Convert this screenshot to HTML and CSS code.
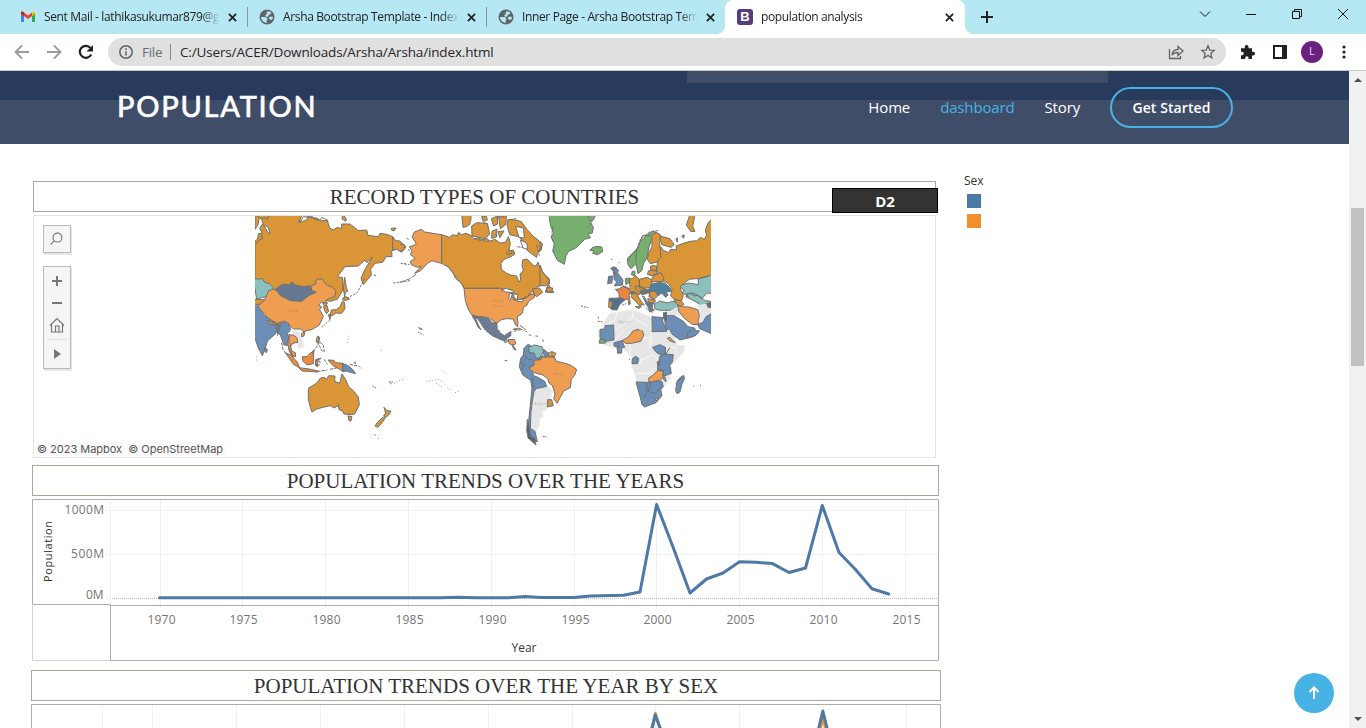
FILE: index.html
```html
<!DOCTYPE html>
<html lang="en">
<head>
<meta charset="utf-8">
<title>population analysis</title>
<link rel="stylesheet" href="styles.css">
</head>
<body>
<div class="window">
  <div class="tabstrip">
    <div class="tab">
      <svg class="fav" viewBox="0 0 16 16"><path fill="#4285f4" d="M1 4v9h3V7z"/><path fill="#34a853" d="M15 4v9h-3V7z"/><path fill="#fbbc04" d="M12 4l1.300-1.200c1-.5 1.700.2 1.700 1.200v1L12 7z"/><path fill="#ea4335" d="M1 5V4c0-1.200 1-1.800 2-1.200l5 3.700 4-3V7L8 10 4 7z"/><path fill="#c5221f" d="M1 5V4c0-1.200 1-1.800 2-1.200L4 3.500V7z"/></svg>
      <span class="tab-text">Sent Mail - lathikasukumar879@g</span>
      <svg class="x" viewBox="0 0 10 10"><path d="M1 1l8 8M9 1l-8 8"/></svg>
    </div>
    <div class="tab">
      <svg class="fav" viewBox="0 0 16 16"><circle cx="8" cy="8" r="7.500" fill="#5f6368"/><path fill="#b5e8f2" d="M8 2.500h3l1.500 2-2.500 1.200-1 2H7L6 6.500l1.500-1zM2 8h4.500l2.300 1.800-1 1.200v2.800C4.500 13.700 2.300 11.500 2 8zM9.500 9l2-1.500 2.500.5-.5 2.200-2 .8z"/></svg>
      <span class="tab-text">Arsha Bootstrap Template - Index</span>
      <svg class="x" viewBox="0 0 10 10"><path d="M1 1l8 8M9 1l-8 8"/></svg>
    </div>
    <div class="tab last">
      <svg class="fav" viewBox="0 0 16 16"><circle cx="8" cy="8" r="7.500" fill="#5f6368"/><path fill="#b5e8f2" d="M8 2.500h3l1.500 2-2.500 1.200-1 2H7L6 6.500l1.500-1zM2 8h4.500l2.300 1.800-1 1.200v2.800C4.500 13.700 2.300 11.500 2 8zM9.500 9l2-1.500 2.500.5-.5 2.200-2 .8z"/></svg>
      <span class="tab-text">Inner Page - Arsha Bootstrap Tem</span>
      <svg class="x" viewBox="0 0 10 10"><path d="M1 1l8 8M9 1l-8 8"/></svg>
    </div>
    <div class="tab active">
      <span class="bs">B</span>
      <span class="tab-text">population analysis</span>
      <svg class="x" viewBox="0 0 10 10"><path d="M1 1l8 8M9 1l-8 8"/></svg>
    </div>
    <svg class="plus" viewBox="0 0 12 12"><path d="M6 0v12M0 6h12"/></svg>
    <div class="controls">
      <svg viewBox="0 0 12 12"><path d="M1 3.500l5 5 5-5"/></svg>
      <svg viewBox="0 0 12 12"><path d="M1 6.500h10"/></svg>
      <svg viewBox="0 0 12 12"><path d="M1.500 3.500h7v7h-7zM3.500 3.500v-2h7v7h-2"/></svg>
      <svg viewBox="0 0 12 12"><path d="M1 1l10 10M11 1L1 11"/></svg>
    </div>
  </div>
  <div class="toolbar">
    <div class="navbtns">
      <svg viewBox="0 0 16 16"><path d="M15 8H2M8 1.500L1.500 8 8 14.500" stroke="#9b9b9b"/></svg>
      <svg viewBox="0 0 16 16"><path d="M1 8h13M8 1.500L14.500 8 8 14.500" stroke="#9b9b9b"/></svg>
      <svg viewBox="0 0 16 16"><path d="M13.200 10.500A6 6 0 1 1 12.500 4" stroke="#202124" stroke-width="2.200"/><path d="M15 1v6.500H8.500z" fill="#202124"/></svg>
    </div>
    <div class="omnibox">
      <svg class="info" viewBox="0 0 14 14"><circle cx="7" cy="7" r="6.200"/><path d="M7 6.200v4.300M7 3.300v1.700"/></svg>
      <span class="scheme">File</span><i class="bar"></i>
      <span class="url">C:/Users/ACER/Downloads/Arsha/Arsha/index.html</span>
      <svg class="share" viewBox="0 0 16 16"><path d="M1.500 5v9.500h11V12M4 11c.5-3.500 2.500-5.500 6-5.500V2.500l5 4.500-5 4.500v-3C7.500 8.500 5.500 9 4 11z"/></svg>
      <svg class="star" viewBox="0 0 16 16"><path d="M8 1.800l1.700 4.300 4.600.3-3.500 3 1.100 4.500L8 11.500l-3.900 2.400 1.100-4.500-3.500-3 4.600-.3z"/></svg>
    </div>
    <div class="actions">
      <svg viewBox="0 0 16 16"><path fill="#202124" d="M1 4.200h3.700V3a1.900 1.900 0 0 1 3.800 0v1.200H12v3.500h1.200a1.900 1.900 0 0 1 0 3.800H12V15H8.600v-1.100a1.700 1.700 0 0 0-3.400 0V15H1v-3.800h1.100a1.700 1.700 0 0 0 0-3.400H1z"/></svg>
      <svg viewBox="0 0 16 16"><path d="M2 2h12v12H2z" fill="none" stroke="#202124" stroke-width="2"/><path fill="#202124" d="M10 2h4v12h-4z"/></svg>
      <span class="avatar">L</span>
      <svg viewBox="0 0 16 16" fill="#202124"><circle cx="8" cy="3" r="1.600"/><circle cx="8" cy="8" r="1.600"/><circle cx="8" cy="13" r="1.600"/></svg>
    </div>
  </div>
  <div class="viewport">
    <div class="page">
      <header class="header">
        <span class="logo">POPULATION</span>
        <nav class="menu"><a>Home</a><a class="on">dashboard</a><a>Story</a><a class="cta">Get Started</a></nav>
      </header>
      <main class="content">
        <div class="dash">
          <h2 class="title t1">RECORD TYPES OF COUNTRIES<span class="d2">D2</span></h2>
          <section class="map">
            <div class="tools">
              <div class="tool"><svg viewBox="0 0 28 28"><circle cx="14.500" cy="12.500" r="4.800"/><path d="M11 16l-4 4"/></svg></div>
              <div class="tool tall"><svg viewBox="0 0 26 101"><path stroke-width="2" d="M8 14h10M13 9v10M8 36h10"/><path d="M6 58.500l7-7 7 7M7.500 57v8h11v-8M11.500 65v-6H15v6"/><path stroke="#e0e0e0" d="M3 72.500h20"/><path fill="#777" stroke="none" d="M10 82l7 5-7 5z"/></svg></div>
            </div>
            <svg class="world" viewBox="255 216 456 232">
              <defs>
                <clipPath id="north"><path d="M-20-20h700v380H-20z"/></clipPath>
                <clipPath id="south"><path d="M-20 30h800v400H-20z"/></clipPath>
              </defs>
              <g transform="translate(250 210) scale(.33333)" class="land">
                <path fill="#d99536" d="M15 10H160L145 38 165 22 200 24 212 32 232 32 240 55 250 60 262 52 275 56V42L300 42 325 62 350 60 354 76 385 80 390 70 410 73 428 80 437 92 450 93 468 110 455 127 440 118 425 122 426 140 408 140 398 157 375 160 362 178 364 195 340 224 333 205 345 178 367 142 350 158 345 150 325 168 285 170 262 200 278 203 279 240 262 268 240 274 150 250 15 232z"/>
                <path fill="#fff" d="M13 95l10-8 2-16 12-2-8-14 8-12 8 8 9 18 6 3-5-20-15-8-5-16-8-6-2 20-12 20zM150 38l10-18 16 2-10 9z"/>
                <path d="M428 80v42M170 20h18l6 8 16 2 5-8 20 10M20 18l15 9 9-5 7 7 6-11M19 101l10-12 8-2-3-18"/>
                <path fill="#d99536" d="M424 55l14-1-6 9-8-3zM278 10l12 20-4 4-10-8zM284 202l5 30 4 12-7 3-2 15-4-28z"/>
                <path fill="#8cc0bd" d="M10 205h5l14 3 7-3 9 13 12 2 14 14-14 12-4 15-15 1-18 6z"/>
                <path fill="#d99536" d="M10 268l37 1-14 13-23 3z"/>
                <path fill="#ef9e51" d="M24 288l20-18 12-28 15-5 24 18 22 15 27 2 20-18 22-10-7-14 18-8 1-12 8-3 12 1 7 12 8 6 14 6 11 10-3 18-14 4-14 8 3 8-16-4-8 10 9 4-6 9 11 20-12 26-20 13-18 4-9 4-9-9-22 0-12-12-20-5-19 3-25-14-10-18-16-12z"/>
                <path fill="#657a92" d="M78 236l23-14 17 3 6-9 13 9 28 6 10-4 9 5 1 9 14 6-22 9-22 18-31-2-33-15z"/>
                <path fill="#d99536" d="M244 300l15-1 12-10 5-14 7 1 2 20-10 14-17-1-8 6-10 2zM279 264l10-4 10 7-13 5-8-2zM236 313l7 2-3 12zM221 289l9-5 6 20-7 7-6-12z"/>
                <path fill="#ef9e51" d="M218 280l15-2-8 11z"/>
                <path stroke-dasharray="7 4" d="M290 265l32-17 23-46M240 332l-4-16M452 160l26 4M430 219l50-7M372 195l10 4M470 85l10 5M475 117l5 7"/>
                <path fill="#6b8eb6" d="M10 290l13-3 20 30 45 28-10 25-25 22-10 30-6 15-13-25-14-42zM79 344l8-5 9 7 5-13 14 6 7 20-10 12 9 22 1 32-8-19-12-1-11-30-10-7z"/>
                <path fill="#d99536" d="M50 330l25 10 4 6-21-4zM82 340l13-5-4 10z"/>
                <path d="M79 344l12 5-9 28"/>
                <path class="na" d="M127 360l18 4 7 13 7 15 1 18-14 7-7-22-14-16z"/>
                <path fill="#ef9e51" d="M117 374l14 7 12 15-20 5-1 17 7 22-11-15-5-26zM155 370l9-4-2 12-7 2zM203 379l6 4-4 18-7-7z"/>
              </g>
              <g transform="translate(250 320) scale(.33333)" class="land">
                <path fill="#ef9e51" d="M117 44l14 2 10 7 2 14-14 2-6 8-6-12zM120 76l6 18 10 4 1 12-8-2-13-26M202 50l5 0-1 20-7-9z"/>
                <path fill="#e98b3d" d="M106 98l18 8 20 23 4 14-18-10zM146 143l31 4 28 6-1 3-48-3zM157 110l14 0 12-13 8 4-1 30-19 4-12-11zM234 120l18 1 4 7 23 2v24l-13-8-16-8z"/>
                <path fill="#e98b3d" d="M197 119l12-4-5 7-2 18-6-4zM185 96l8-4-3 10z"/>
                <path fill="#6b8eb6" d="M278 130l18 8 14 13 7 10-16-4-12-4-11 2zM45 83l7 5-2 10-6-4z"/>
                <path stroke-dasharray="10 3" d="M198 120l15-6-7 9 5 3-6 12-7-2zM187 95l13-14 8-14M210 65l10 12 3 18-8-3-7-16M212 68l6 6M95 68l4 20 8 12M202 154l30-4M222 118l10 15M300 133l20 5-6-12M240 148l20-4"/>
                <path fill="#d99536" d="M175 205l27-17 8-13 12-3 8 6 6-11 19 1-1 16 15 6 7-28 11 17 9 21 14 12 15 19 3 23-14 28-12 2-20-2-5-10-9-2-4-13-11 7-12-7-22 5-19 5-14 9-5-14-6-24zM294 288l12 2-3 13-6-1zM402 262l9 10 12 1-7 12-10 8-5-8 6-5zM400 291l5 4-12 17-10 10-8-4 9-13z"/>
                <path stroke-dasharray="5 3" d="M373 343l4 3M385 355h2M367 198l14 8M417 186l10-1-3 7zM310 130l8-6M325 137l8 8M290 285l8-6M265 252l3 15M504 36l16 9M215 22l22-20"/>
                <path stroke-dasharray="2 7" stroke="#aaa" stroke-width="2" d="M432 190l30-14M530 184l40-6 30 32M575 150l8 7M292 67l5-20M558 190l20 12M615 218l11-4M392 90l4 4M20 110v14"/>
              </g>
              <g transform="translate(400 210) scale(.33333)"><g class="land" clip-path="url(#north)">
                <path fill="#ef9e51" d="M64 58l10 8 25 4 26 4v86l-16-4-13-4-12 7-22 23-18 8 20-22-12 4-18-8-3-10 15-9-15-11 5-12-8-12 11-3 10-6-13-20 7-15z"/>
                <path d="M48 193l-20 14-28 10M12 160l6 3" stroke-dasharray="16 3"/>
                <path d="M0 103l12 1 3 12-15 8" fill="#d99536"/>
                <path fill="#d99536" d="M125 74L149 82 158 74 171 77 176 67 184 74 198 70 214 77 221 86 235 84 249 89 262 86 269 94 284 88 300 99 317 97 325 80 331 100 327 122 340 120 345 132 333 140 312 148 303 160 304 178 320 190 335 196 350 198 357 216 362 210 360 192 370 182 366 165 368 150 380 147 392 157 398 166 408 168 414 156 422 180 432 192 448 206 449 221 425 226 408 232 396 246 384 256 398 252 402 262 378 264 350 271 338 267 346 254 335 240 315 242 302 235H192L186 222 172 208 160 190 146 172 125 160z"/>
                <path fill="#d99536" d="M185 10h28v17l-4 16-10 7-10 2zM215 48l15-10 32 2 7 32-13 14-20-4-20-4zM245 20l14-2 3 12-12 4zM274 26l18-8 1 24-12 6zM296 20l24-6-3 30-16 12zM324 28l24 2 16 5 18 24 17 19 27 22-2 20-12 10-2 12-28-20-7-24-20-18-26-6-8-30zM276 64l15-7-2 24-14 4zM294 65l18-2-12 20zM318 130l12-10 8 8-14 6z"/>
                <path fill="#fff" d="M347 49l23 5 3 30-16-2zM361 90l20 10 2 18-14-4z"/>
                <path stroke-width="6" stroke-dasharray="10 3" d="M140 165l18 22 8 18 16 13 12 20M222 86l32 8 25-2M292 22l22-2M330 30l18-5M285 72l8 6M410 105l8 32M352 110l16 3M250 35l8 8"/>
                <path fill="#d99536" d="M398 236l20-2 10 13-18 13-8-7zM441 232l5-9 8 16 8 8-16 1-10-2z"/>
                <path fill="#ef9e51" d="M192 235H302l16 5 19 5 3 24 13 2 24-7 13-9 14-5-1 12-17 12-5 12-11 6-2 17-17 12 3 17-1 13-8-9-5-15-20-1-16 3-15 12-6-6-14-10-18-5-17 1-20-8-10-17-8-25z"/>
                <path fill="#fff" d="M304 240l15-5 22 8-2 5-22-2zM328 252l10-3-8 23-4-3zM340 251l14 3-3 18-9-12zM349 270l20-3 8-8-11 17-16-3z"/>
                <path fill="#6e7b94" d="M216 317l27 4 23 5 11 13 13-2 2 22 1 18 16 8 7-7 15-5-3 14-12 13-24-10-27-16-13-19-18-28-9-5 11 25 8 14-10-10-8-18z"/>
                <path fill="#d99536" stroke-dasharray="14 3" d="M339 358l18-4 19 11-10 2-16-8zM360 346l14 10 9 11M55 353l10 3 6 9-8-2"/>
              </g></g>
              <g transform="translate(540 210) scale(.33333)"><g class="land" clip-path="url(#north)">
                <path fill="#76af6e" d="M26 10H166v8l-8 14-6 6 8 14-3 17-13 2 8 12-18 5-25 25-23 11-8 13-5 26-20-11-15-29 5-22-10-20 8-12-9-20z"/>
                <path stroke-width="5" stroke-dasharray="8 4" d="M144 18l12 20-14 14M38 50l-3 30 6 20M150 118l12 5"/>
                <path fill="#76af6e" d="M158 112l14-3 13 2 4 13-16 10-15-4 4-7-12-2z"/>
                <path fill="#d99536" d="M0 165l8 20 20 27-8 15H0zM20 233l18 1-3 12-16-3zM0 95l8 8-8 20zM352 100L362 110 370 121 386 128 392 118 410 120 408 108 430 100 450 94 470 92 482 82 493 88 500 76 496 60 504 40 514 28 525 28V198L508 197 478 205 448 208 425 225 422 240 430 256 425 272 405 270 392 258 396 236 384 220 366 212 362 192 350 182 352 160z"/>
                <path fill="#d99536" d="M465 10h-14l-12 35 14 20 12-1-7-15 6-30zM425 78l8-3-2 10zM408 87l4-4v14z"/>
                <path fill="#76af6e" d="M262 145l16-15 13-13 7-19 19-20 22-15 20 10-20 7-6 14-6 17-7 34-10 16-4 20-12 10-6-30-15 15-9-12zM277 184l8 0-1 14-10-4zM256 206l13-2-2 14-9 6z"/>
                <path stroke-width="7" stroke-dasharray="9 3" d="M262 155l16-26 16-16 8-28 28-20 25-3"/>
                <path d="M290 116l-3 42M300 97l8-20 22 0"/>
                <path fill="#d99536" d="M335 76l14-8 13 7-3 25 4 42-12 14-20 5-9-13 4-20 10-18zM360 78l30 8 13 18-10 8-28-8zM340 166l10 3 0 14-18-4-1-10zM326 182l22 0 6 10-18 5-14-4zM342 194l20-6 10 15-4 12-26 0-12 3z"/>
                <path fill="#d99536" d="M268 207l10-2 8-9 12 12 0 28 11 8-12 10-15-6-15 0 3-15zM298 208l24-6 13 8-3 22-24 4-10-8zM286 228l24 4 8 7-20 7-12-9zM307 240l22 1-18 12-10-3zM330 244l16-1 8 14-11 10-16-7zM323 266l23 4-2 10-18-3zM275 250l16-1 4 12 11 16 7 8-10-2 0 9-14-16-14-13zM250 227l15 7 1 10-12-10z"/>
                <path fill="#4e819d" d="M335 222l25-5 16 4 14 12 4 10-19 5 10 6-8 8-12-13-10 8-9-14-19 2-22 8 18-9zM265 246l18-2 0 7-17 0zM304 246l18-8 9 8-19 7z"/>
                <path fill="#ef843f" d="M226 238l11-1 12-8 17 9 6 8-5 10 3 10-14 3-18 0-1-20z"/>
                <path fill="#6b8eb6" d="M206 199l12-1-2 21-13 2zM220 184l-8-9 10-5 13 10-2 9 16 21-2 15-24 3 7-12-7-7z"/>
                <path stroke-width="5" d="M217 176l12-3-8 12 10 16M210 200l-6 17M228 190l-9-3"/>
                <path fill="#56708b" d="M207 265l37-1 11 5-17 16-7 15-15-1-7-6z"/>
                <path fill="#d99536" d="M207 272l10 4-3 18-8-2zM286 290l15 0-4 6zM265 270l4-2 2 14-5 2z"/>
                <path fill="#647b91" d="M311 258l15 25 17 18-14 5-4-14-7-10zM322 278l18 1-4 15z"/>
                <path stroke-dasharray="6 3" stroke-width="5" d="M302 248l12 24 10 6M320 240l20 32M318 294l20 14M246 286l12-5M173 334l18 2M175 320v6M123 288l22 5M214 146l2 4M235 160l4-4"/>
                <path fill="#8cc0bd" d="M344 283l15-10 24 6 15-5 22 5-4 16-20 6-30 0-12-1-10-4zM425 225l20-6 31 5-2-16 51-16v59l-23-2-17 17-12-10-10 2-13-9-15 5-7-6 4-8-12-9zM440 253l16-4 20 8 20 15 17 2-12 20-20-10-25-15-10-4z"/>
                <path fill="#d99536" d="M402 268l22 5 8 10-10 7-14-10zM440 253l6 10-8-2z"/>
                <path class="na" d="M210 310l70-11 40 18 70 7 5 66H180l10-50zM380 310l36-20 24 28 25 10 15-28-10-14 55-4v50l-50 16-33-20-18-15-44 9z"/>
                <path class="border" d="M232 304l-8 28-28 14M278 300v22l-50 38M334 320v70M280 322l40 26"/>
                <path fill="#ef9e51" d="M413 286l14 4 20 1 27 8 4 20-4 12 2 12-18 1-25-19-16-20z"/>
                <path fill="#6b8eb6" d="M336 320l34 3-3 10 10 22v30l-40 5zM370 308l12 9 20 0 28 17 14 16 20 4 4 12-22 26h-60l-12-60zM474 344l16-8 8-16 27-15v83l-26-23-20-9zM180 400v-42l15-1v-10l26-2v56h-41z"/>
                <path fill="#56708b" d="M370 310l10-4-1 27-7-7zM500 280l25-4v18l-21-2z"/>
                <path fill="#ef9e51" d="M257 390l6-14 21-14 8-4 12 4 0 28z"/>
              </g></g>
              <g transform="translate(490 320) scale(.33333)"><g class="land" clip-path="url(#south)">
                <path class="na" d="M328 22l42-22h180l10 75 25 2-3 20-37 38-3 40-18 20-9 20-20 10-48-7-10-50-12-30 3-24-18-20-20-3-20-10-22-4-20-15-3-35z"/>
                <path class="border" d="M400 30l-24 32M445 60l30-8 14 18M455 120l35-16 15 18-4 22 15 18M440 130h14v-20M440 160l40 0 20-22M486 34l-8 50M524 82l30 0 10 18M404 72l-6 26M420 68v30"/>
                <path fill="#6b8eb6" d="M330 50V0h41l1 60-24 4-17-6zM486 0h38l6 34-44 1zM529 0h70l28 20-2 14-16 16-39 10-24-18-14-28zM613 0h60v45l-35-15-15-10zM488 82l22-8 16 8 0 22-20-2-10-8zM372 68l24-6 8 20-9 1 0 16-12 1-2-20-9-2zM427 116l10-7 9 6-3 16-17 0zM510 108l16-6 24 2-3 22-8 10 5 24-19 7-21-12-2-13z"/>
                <path fill="#6b8eb6" d="M605 30l16-8 7 12-10 12-24 8-2-16z"/>
                <path fill="#ef9e51" d="M396 62l18-10 16-20 24-4 8 16-10 20-28 6-16 0zM532 55l8-3 6 8 10 8-18-6zM476 174l14-9 12-13 18 0 0 18-12 13-13 6-18-3z"/>
                <path fill="#76af6e" d="M328 61l12-4 8 12-20 1zM518 163l8 9 2 13-7-6z"/>
                <path fill="#647b91" d="M502 125l8 0-2 13-6-6z"/>
                <path fill="#6b8eb6" d="M438 186l34 1 11 0 18-5 14 2 4 10-7 15 4 18-18 21-34 13-8-7-6-25zM581 166l3 9-8 17-6 24-9 5-4-10 4-27 10-12z"/>
                <path d="M472 188l-3 32-7 15M483 188l-9 26 22 7 14-16 12-6M527 82l-2 22M540 82l-12 20M510 145l12 16M386 70v14M575 175l-12 8"/>
                <circle cx="500" cy="238" r="4" fill="#ef9e51"/>
                <path class="na" d="M130 208l14-10 20-4 12 8 10 10-4 24-12 4 2 28-15 7 3 14-11 8 0 18-10 16-3 20-14 12 0-66z"/>
                <path fill="#6b8eb6" d="M92 115l8-10 2-20 12-12 10 5-2 16 14 6 8 12 15-5 0 14-16 8-16 22 4 16 13 5 20 12 6 15-16 4-14 2-8 10-5 30-4 30-2 50 14 9 7 31-18-7-11-24 7-70 6-60-4-23-24-16-10-25z"/>
                <path fill="#566473" stroke-width="5" stroke-dasharray="7 2" d="M112 298l-2 34 4 22 16 14 8 8-3-20-13-8-3-20z"/>
                <path fill="#8cc0bd" d="M116 80l8 0 8-5 24 5 5 15-14 20-11-2-2-13-16-3z"/>
                <path fill="#6b8eb6" d="M161 88l10 8 3 12-10 2-4-10z"/>
                <path fill="#ef9e51" d="M116 145l16-10 0-14 20-2 4-8 15 1 18-5 5 7 5 10 20 4 24 8 17 12-6 18-10 12-3 25-20 10-10 19-10 18-10-14 4-14-8-26-9-6-5-14-14-11-16-4-12-4zM175 98l11-3 12 5-6 12-16-2z"/>
                <path fill="#d99536" d="M173 239l12 0 5 18-18 4z"/>
                <path d="M100 105l16 14 14-2M90 127l14 8-10 14M127 173l4 33M186 97v13"/>
                <path fill="#ef9e51" d="M55 58l19 1 3 13-10 4-10-6zM66 72l8 11 4 8-8-5z"/>
                <path fill="#8cc0bd" d="M42 59l7-3 4 8-8 4z"/>
                <path fill="#6e7b94" d="M-8 10L22 2l6 35 15 10 20-13-1 14-14 8-8 6-32-14-20-16z"/>
                <path stroke-width="4" stroke-dasharray="8 4" d="M72 34l24-6 16 8M116 44l12 4M136 48l9 1M158 58l3 10M44 121l8 2M158 349l14 2"/>
                <path stroke-width="2" stroke-dasharray="3 9" d="M417 118h4M610 198h3M630 196h4"/>
              </g></g>
              <text x="618" y="323">Algeria</text><text x="534" y="405">Argentina</text><text x="553" y="375">Brazil</text><text x="286" y="312">CHINA</text><text x="491" y="302">United</text><text x="491" y="307">States</text>
            </svg>
            <div class="credit">© 2023 Mapbox&nbsp; © OpenStreetMap</div>
          </section>
          <h2 class="title t2">POPULATION TRENDS OVER THE YEARS</h2>
          <svg class="chart" viewBox="32 499 907 163">
            <path class="grid" d="M110.500 500v104M160.500 500v108M242.500 500v108M325.500 500v108M408.500 500v108M491.500 500v108M574.500 500v108M656.500 500v108M739.500 500v108M822.500 500v108M905.500 500v108M106 510.500h832M106 554.500h832M106 598.500h5"/>
            <path class="zero" d="M112 598.500h826"/>
            <path stroke="#d4d4d4" fill="none" d="M32.500 605v55.500h78"/>
            <path class="frame" d="M110.500 499.500H32.500v105h78M111 499.500h827.500v161H110.500v-56M110.500 605.500h828"/>
            <path class="series" d="M159.500 597.800H441L458 597.300 475 597.800H508L525 596.600 541 597.500H574L590 596 623.500 595.200 640 592 656.600 504.500 673 547 690 593 706.500 579 723 573 739.500 561.700 756 562.300 772.500 563.600 789 572.500 805.500 568 822.300 505.500 839 552.500 855 569 872 588.700 888.700 594"/>
            <g class="lab"><text x="64.500" y="514" textLength="39.500">1000M</text><text x="71" y="558" textLength="33">500M</text><text x="86" y="599">0M</text></g>
            <g class="lab" text-anchor="middle"><text x="161.500" y="624" textLength="28">1970</text><text x="243.500" y="624" textLength="28">1975</text><text x="326.500" y="624" textLength="28">1980</text><text x="409.500" y="624" textLength="28">1985</text><text x="492.500" y="624" textLength="28">1990</text><text x="575.500" y="624" textLength="28">1995</text><text x="657.500" y="624" textLength="28">2000</text><text x="740.500" y="624" textLength="28">2005</text><text x="823.500" y="624" textLength="28">2010</text><text x="906.500" y="624" textLength="28">2015</text></g>
            <text class="axis" x="511.500" y="652" textLength="25">Year</text>
            <text class="axis small" transform="translate(52 582) rotate(-90)" textLength="61">Population</text>
          </svg>
          <h2 class="title t3">POPULATION TRENDS OVER THE YEAR BY SEX</h2>
          <svg class="chart3" viewBox="31 704 910 40">
            <path class="grid" d="M102.500 705v39M152.500 705v39M236.500 705v39M320.500 705v39M404.500 705v39M488.500 705v39M572.500 705v39M655.500 705v39M739.500 705v39M823.500 705v39M906.500 705v39"/>
            <path class="frame" d="M31.500 744v-39.500h909V744"/>
            <path class="series women" d="M649 744L655.300 713.500 665 744M816 744L823 718 830 744"/>
            <path class="series" d="M648 744L655.300 715 666 744M815 744L822.800 711 831 744"/>
          </svg>
        </div>
        <aside class="legend"><div>Sex</div><i class="men"></i><i class="fem"></i></aside>
      </main>
      <div class="totop"><svg viewBox="0 0 16 16"><path d="M8 14V3M3.500 7L8 2.500 12.500 7"/></svg></div>
    </div>
    <div class="scroll"><i class="up"></i><i class="thumb"></i><i class="down"></i></div>
  </div>
</div>
</body>
</html>
```
FILE: styles.css
```css
* { box-sizing: border-box; }
body { margin: 0; overflow: hidden; font-family: "Open Sans", sans-serif; }
svg { display: block; flex: none; }
.window { width: 1366px; height: 728px; display: flex; flex-direction: column; overflow: hidden; }
.tabstrip { height: 34px; flex: none; background: #b5e8f2; display: flex; padding-left: 8px; }
.tab { position: relative; width: 239px; height: 34px; padding: 0 10px 0 12px; display: flex; align-items: center; }
.tab::after { content: ""; position: absolute; right: -1px; top: 7px; width: 1px; height: 20px; background: #809aa0; }
.tab.last::after, .tab.active::after { display: none; }
.fav { width: 16px; height: 16px; margin-right: 8px; }
.tab-text { width: 176px; font: 12px/18px "Open Sans", sans-serif; letter-spacing: -.36px; color: #202124; white-space: nowrap; -webkit-mask: linear-gradient(90deg, #000 158px, transparent 176px); mask: linear-gradient(90deg, #000 158px, transparent 176px); }
.x { width: 9px; height: 9px; margin-left: 7.5px; fill: none; stroke: #202124; stroke-width: 2; }
.active { width: 240px; background: #fff; border-radius: 8px 8px 0 0; }
.active::before { content: ""; position: absolute; left: -8px; right: -8px; bottom: 0; height: 8px; background: radial-gradient(circle at 0 0, transparent 7.5px, #fff 8px) left / 8px 8px no-repeat, radial-gradient(circle at 100% 0, transparent 7.5px, #fff 8px) right / 8px 8px no-repeat; }
.bs { width: 16px; height: 16px; margin-right: 8px; flex: none; border-radius: 3px; background: #563d7c; color: #fff; font: bold 13px/16px "Liberation Sans", sans-serif; text-align: center; }
.plus { width: 12px; height: 12px; margin: 11px 0 0 16px; stroke: #202124; stroke-width: 2; }
.controls { margin: 8px 17px 0 auto; display: flex; gap: 34px; }
.controls svg { width: 12px; height: 12px; fill: none; stroke: #111; stroke-width: 1; }
.toolbar { height: 37px; flex: none; background: #fff; border-bottom: 1px solid #c8ccc9; display: flex; align-items: center; padding: 0 14px; }
.navbtns { display: flex; gap: 16px; margin-right: 14px; }
.navbtns svg { width: 16px; height: 16px; fill: none; stroke-width: 1.8; }
.omnibox { width: 1118px; flex: none; height: 28px; border-radius: 14px; background: #e0e0e0; display: flex; align-items: center; padding: 0 10px 0 11px; line-height: 20px; white-space: nowrap; }
.info { width: 14px; height: 14px; fill: none; stroke: #5f6368; stroke-width: 1.5; margin-right: 9px; }
.scheme { width: 21px; color: #6b6e72; letter-spacing: -.3px; font-size: 13.5px; }
.bar { width: 1px; height: 16px; background: #888; margin: 0 9px 0 7px; }
.url { color: #25262a; letter-spacing: -.15px; font-size: 13.5px; }
.share, .star { width: 16px; height: 16px; fill: none; stroke: #5f6368; stroke-width: 1.3; }
.share { margin-left: auto; margin-right: 16px; }
.actions { display: flex; align-items: center; margin-left: 14px; flex: none; }
.actions svg { width: 16px; height: 16px; margin-right: 16px; }
.avatar { width: 22px; height: 22px; flex: none; border-radius: 50%; background: #6b217e; color: #e5d8ea; font: 10px/22px "Liberation Sans", sans-serif; text-align: center; margin: 0 13px 0 -3px; }
.actions svg:last-child { margin: 0; }
.viewport { flex: 1; display: flex; min-height: 0; }
.page { width: 1349px; position: relative; overflow: hidden; background: #fff; }
.header { height: 73px; padding: 0 116px 0 117px; display: flex; align-items: center; justify-content: space-between; background: linear-gradient(#3f4d69, #3f4d69) 687px 0 / 421px 12px no-repeat, linear-gradient(#293b5c 29px, #3f4d69 29px); color: #fff; }
.logo { font: 29px/40px Lato, sans-serif; -webkit-text-stroke: .7px #fff; letter-spacing: 1.8px; padding-bottom: 3px; white-space: nowrap; }
.menu { display: flex; align-items: center; gap: 30px; font-size: 15px; line-height: 20px; letter-spacing: -.15px; white-space: nowrap; }
.menu a:not(.cta) { padding-bottom: 2px; }
.on { color: #47b2e4; }
.cta { width: 123px; height: 41px; border: 2px solid #47b2e4; border-radius: 21px; font-weight: 600; font-size: 14px; line-height: 37px; text-align: center; letter-spacing: .1px; }
.content { display: flex; padding: 37px 0 0 31px; align-items: flex-start; }
.dash { width: 910px; flex: none; }
.title { position: relative; margin: 0; height: 31px; border: 1px solid #aaa89a; font: 21px/30px "Liberation Serif", serif; text-align: center; color: #333; white-space: nowrap; }
.t1 { margin: 0 5px 3px 2px; }
.t2 { margin: 7px 2px 3px 1px; }
.t3 { margin: 8px 0 3px; }
.d2 { position: absolute; left: 798px; top: 6px; width: 106px; height: 25px; border: 1px solid #000; background: #333; color: #fff; font: bold 15px/24px "Open Sans", sans-serif; }
.map { position: relative; height: 243px; margin: 0 5px 0 2px; border: 1px solid #e3e3e3; overflow: hidden; padding: 0 0 0 221px; }
.world { width: 456px; height: 232px; }
.land path, .land circle { stroke: #6e6f70; stroke-width: 3; stroke-linejoin: round; }
.land path:not([fill]) { fill: none; }
.land .na { fill: #e6e6e6 !important; stroke: #eee; }
.land .border { stroke: #f8f8f8; }
.world text { font: 4px "Open Sans", sans-serif; fill: #777; fill-opacity: .45; }
.tools { position: absolute; left: 9px; top: 9px; display: grid; gap: 13px; }
.tool { width: 28px; height: 28px; background: #f5f5f5; border: 1px solid #bababa; box-shadow: 1px 2px 0 #e5e5e5; }
.tool.tall { height: 103px; }
.tool svg { width: 26px; height: 26px; fill: none; stroke: #777; stroke-width: 1.2; }
.tool.tall svg { width: 26px; height: 101px; }
.credit { position: absolute; left: 2px; bottom: 1px; padding: 0 2px 0 1px; background: #fafafa; font: 11px/14px Inter, sans-serif; letter-spacing: -.02px; color: #555; white-space: nowrap; }
.chart { width: 907px; height: 163px; margin-left: 1px; }
.chart3 { width: 910px; height: 40px; }
.grid { fill: none; stroke: #f0f0f0; }
.zero { stroke: #bbb; stroke-dasharray: 1 1; }
.frame { fill: none; stroke: #acacac; }
.series { fill: none; stroke: #4e79a7; stroke-width: 3; stroke-linejoin: round; stroke-linecap: round; }
.women { stroke: #f28e2b; }
.lab { font: 12px "Open Sans", sans-serif; fill: #757575; }
.axis { font: 12px "Open Sans", sans-serif; fill: #333; }
.axis.small { font-size: 11px; }
.legend { margin-left: 23px; margin-top: -9px; font: 12px/18px "Open Sans", sans-serif; color: #333; display: grid; }
.legend i { width: 14px; height: 14px; margin: 4px 0 2px 3px; }
.men { background: #4e79a7; }
.fem { background: #f28e2b; }
.totop { position: absolute; left: 1294px; top: 602px; width: 40px; height: 40px; border-radius: 50%; background: #47b2e4; padding: 12px; }
.totop svg { width: 16px; height: 16px; fill: none; stroke: #fff; stroke-width: 2; }
.scroll { width: 17px; background: #f1f1f1; display: flex; flex-direction: column; align-items: center; }
.up { margin-top: 7px; border: 4px solid transparent; border-top: 0; border-bottom-color: #505050; }
.thumb { width: 13px; height: 158px; margin-top: 126px; background: #c1c1c1; }
.down { margin: auto 0 7px; border: 4px solid transparent; border-bottom: 0; border-top-color: #505050; }
```
